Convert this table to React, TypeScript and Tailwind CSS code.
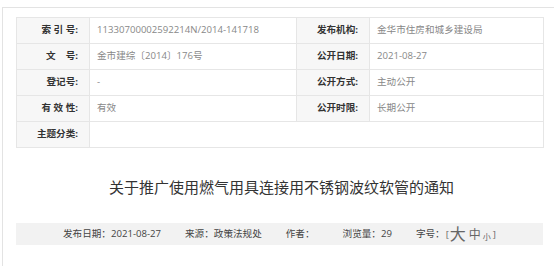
const font = { fontFamily: '"Open Sans", "Noto Sans CJK SC", sans-serif' };

type Row = { label: string; value: string; label2?: string; value2?: string };

const rows: Row[] = [
    { label: '索 引 号:', value: '11330700002592214N/2014-141718', label2: '发布机构:', value2: '金华市住房和城乡建设局' },
    { label: '文    号:', value: '金市建综〔2014〕176号', label2: '公开日期:', value2: '2021-08-27' },
    { label: '登记号:', value: '-', label2: '公开方式:', value2: '主动公开' },
    { label: '有 效 性:', value: '有效', label2: '公开时限:', value2: '长期公开' },
    { label: '主题分类:', value: '' },
];

function Label({ text }: { text: string }) {
    return (
        <td className="h-[26px] w-[73px] whitespace-pre border border-[#e6e6e6] bg-[#f7f7f7] pr-[11px] text-right font-bold text-[#333]">
            {text}
        </td>
    );
}

function Value({ text, span }: { text: string; span?: number }) {
    return (
        <td colSpan={span} className="h-[26px] border border-[#e6e6e6] pl-[7px] text-left text-[#888]">
            {text}
        </td>
    );
}

export default function App() {
    return (
        <div className="h-[268px] w-[554px] overflow-hidden bg-white pl-[2px] pt-[7px]" style={font}>
            <div className="h-[259px] border-l border-t border-[#e3e3e3] pl-[13px] pr-[11px] pt-[9px]">
                {/* info table */}
                <table className="w-[527px] table-fixed border-collapse text-[9.6px]">
                    <colgroup>
                        <col className="w-[73px]" />
                        <col className="w-[207px]" />
                        <col className="w-[73px]" />
                        <col className="w-[174px]" />
                    </colgroup>
                    <tbody>
                        {rows.map((row) => (
                            <tr key={row.label}>
                                <Label text={row.label} />
                                {row.label2 ? (
                                    <>
                                        <Value text={row.value} />
                                        <Label text={row.label2} />
                                        <Value text={row.value2 || ''} />
                                    </>
                                ) : (
                                    <Value text={row.value} span={3} />
                                )}
                            </tr>
                        ))}
                    </tbody>
                </table>

                {/* title */}
                <div className="flex h-[75px] items-center justify-center pl-[4px] pt-[3px]">
                    <h1 className="text-[15px] font-normal text-[#333]">关于推广使用燃气用具连接用不锈钢波纹软管的通知</h1>
                </div>

                {/* meta bar */}
                <div className="flex h-[22px] w-[527px] items-center justify-center gap-[24px] bg-[#f2f2f2] text-[9.6px] text-[#444]">
                    <span>发布日期：2021-08-27</span>
                    <span>来源：政策法规处</span>
                    <span className="pr-[4px]">作者：</span>
                    <span>浏览量：29</span>
                    <span className="flex items-center">
                        字号：
                        <span className="flex items-end text-[#666]">
                            <span className="mx-[1px]">[</span>
                            <span className="text-[16px] leading-[16px]">大</span>
                            <span className="ml-[3px] text-[12px] leading-[14px]">中</span>
                            <span className="ml-[2px] text-[8px] leading-[11px]">小</span>
                            <span className="ml-[2px]">]</span>
                        </span>
                    </span>
                </div>
            </div>
        </div>
    );
}
